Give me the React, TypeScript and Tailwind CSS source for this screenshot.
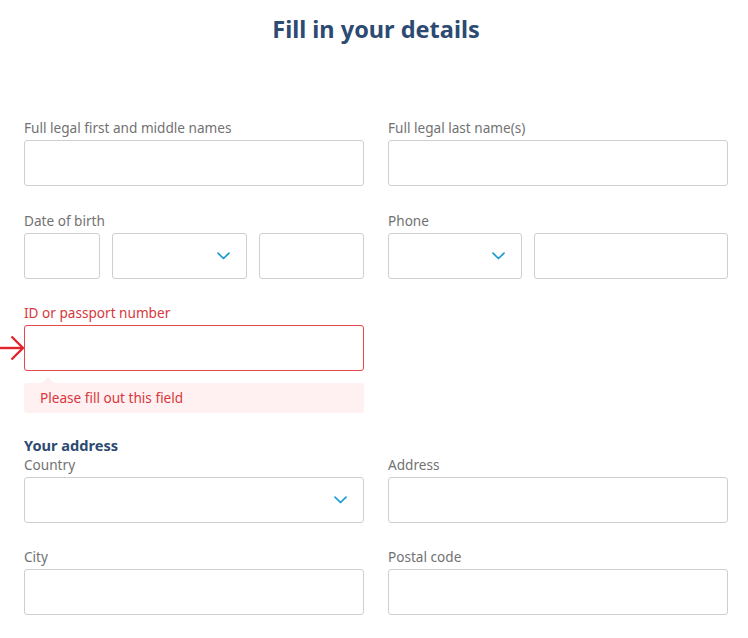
import React from "react";

const Chevron = () => (
  <svg width="13" height="8" viewBox="0 0 13 8" fill="none" className="absolute right-[16px] top-1/2 -translate-y-1/2">
    <path d="M1 1.2 L6.5 6.5 L12 1.2" stroke="#1b9bd3" strokeWidth="1.7" strokeLinecap="round" strokeLinejoin="round" />
  </svg>
);

const Label = ({ children, red }: { children: React.ReactNode; red?: boolean }) => (
  <div className={`text-[13.6px] leading-[18px] mb-[3px] ${red ? "text-[#d7373c]" : "text-[#727272]"}`}>{children}</div>
);

const Box = ({ className = "", select, red }: { className?: string; select?: boolean; red?: boolean }) => (
  <div
    className={`relative h-[46px] rounded-[3px] bg-white border ${red ? "border-[#e3474b]" : "border-[#cfcfcf]"} ${className}`}
  >
    {select && <Chevron />}
  </div>
);

export default function App() {
  return (
    <div className="w-[748px] h-[638px] bg-white overflow-hidden pl-[24px] pr-[20px]" style={{ fontFamily: '"Noto Sans", "Open Sans", sans-serif' }}>
      <h1
        className="text-center text-[23.5px] leading-[32px] font-bold text-[#2d4a72] pt-[13px]"
        style={{ fontFamily: '"Noto Sans", sans-serif' }}
      >
        Fill in your details
      </h1>

      <div className="mt-[74px] grid grid-cols-2 gap-x-[24px]">
        <div>
          <Label>Full legal first and middle names</Label>
          <Box />
        </div>
        <div>
          <Label>Full legal last name(s)</Label>
          <Box />
        </div>
      </div>

      <div className="mt-[26px] grid grid-cols-2 gap-x-[24px]">
        <div>
          <Label>Date of birth</Label>
          <div className="flex gap-[12px]">
            <Box className="w-[76px]" />
            <Box className="w-[135px]" select />
            <Box className="flex-1" />
          </div>
        </div>
        <div>
          <Label>Phone</Label>
          <div className="flex gap-[12px]">
            <Box className="w-[134px]" select />
            <Box className="flex-1" />
          </div>
        </div>
      </div>

      <div className="mt-[25px] grid grid-cols-2 gap-x-[24px]">
        <div>
          <Label red>ID or passport number</Label>
          <div className="relative">
            <Box red />
            <svg
              width="25"
              height="28"
              viewBox="0 0 25 28"
              fill="none"
              className="absolute left-[-24px] top-[9px]"
            >
              <path d="M0 14 H23" stroke="#e3252b" strokeWidth="2.4" />
              <path d="M11.5 2.5 L23 14 L11.5 25.5" stroke="#e3252b" strokeWidth="2.4" strokeLinejoin="miter" />
            </svg>
          </div>
          <div className="relative mt-[12px] h-[30px] rounded-[3px] bg-[#fff1f1] pl-[16px] flex items-center text-[13.6px] text-[#d7373c]">
            <div className="absolute left-[18px] top-[-6px] w-0 h-0 border-l-[6px] border-r-[6px] border-b-[6px] border-l-transparent border-r-transparent border-b-[#fff1f1]" />
            Please fill out this field
          </div>
        </div>
      </div>

      <div
        className="mt-[22px] text-[14.6px] leading-[20px] font-bold text-[#2d4a72]"
        style={{ fontFamily: '"Noto Sans", sans-serif' }}
      >
        Your address
      </div>

      <div className="mt-[1px] grid grid-cols-2 gap-x-[24px]">
        <div>
          <Label>Country</Label>
          <Box select />
        </div>
        <div>
          <Label>Address</Label>
          <Box />
        </div>
      </div>

      <div className="mt-[25px] grid grid-cols-2 gap-x-[24px]">
        <div>
          <Label>City</Label>
          <Box />
        </div>
        <div>
          <Label>Postal code</Label>
          <Box />
        </div>
      </div>
    </div>
  );
}
